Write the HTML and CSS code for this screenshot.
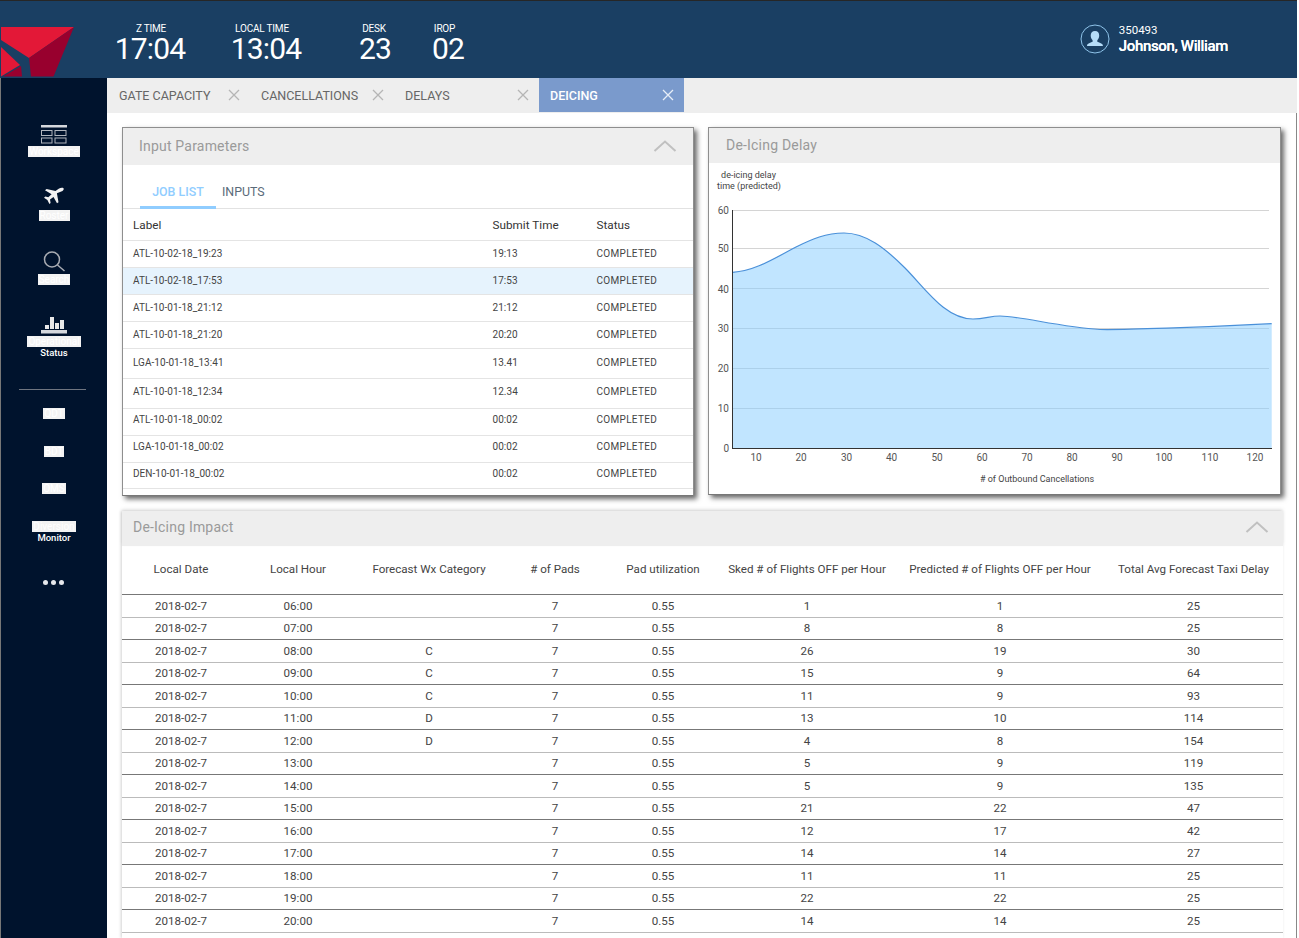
FILE: index.html
```html
<!DOCTYPE html>
<html lang="en">
<head>
<meta charset="utf-8">
<title>De-Icing</title>
<link rel="stylesheet" href="styles.css">
</head>
<body>
<div class="app">
  <header class="topbar">
    <svg class="logo" width="73" height="50" viewBox="0 27 73 50">
      <polygon fill="#e31837" points="0,27 73,27 28,58 0,40"/>
      <polygon fill="#98002e" points="73,27 28,58 30,76.5 52.5,76.5"/>
      <polygon fill="#e31837" points="0,47 19,65 0,76.5"/>
      <polygon fill="#98002e" points="20,66 2,76.5 21,76.5"/>
    </svg>
    <div class="clock clock-z"><span class="clock-label">Z TIME</span><span class="clock-value">17:04</span></div>
    <div class="clock clock-l"><span class="clock-label">LOCAL TIME</span><span class="clock-value">13:04</span></div>
    <div class="clock clock-d"><span class="clock-label">DESK</span><span class="clock-value">23</span></div>
    <div class="clock clock-i"><span class="clock-label">IROP</span><span class="clock-value">02</span></div>
    <div class="user">
      <svg class="avatar" width="30" height="30" viewBox="0 0 30 30">
        <circle cx="15" cy="15" r="14" fill="none" stroke="#8fc4ea" stroke-width="1"/>
        <path fill="#b5dcf8" d="M15 7c-2.8 0-4.3 2-4.3 4.6 0 2 .8 3.6 1.9 4.6v1.5c-1.6.8-4.6 1.4-5.3 2.8-.2.4-.3 1-.3 1.5h15.9c0-.5-.1-1.1-.3-1.5-.7-1.4-3.7-2-5.3-2.8v-1.5c1.1-1 1.9-2.6 1.9-4.6C19.300 9 17.800 7 15 7z"/>
      </svg>
      <div class="user-text"><span class="user-id">350493</span><span class="user-name">Johnson, William</span></div>
    </div>
  </header>
  <div class="below">
    <nav class="sidebar">
      <div class="nav-item nav-a">
        <svg width="28" height="19" viewBox="0 0 28 19"><rect x="1" y="0" width="26" height="2.500" fill="#d5d8dd"/><g fill="none" stroke="#b0b5bd" stroke-width="1"><rect x="1.500" y="5.500" width="10.500" height="5"/><rect x="15" y="5.500" width="11" height="5"/><rect x="1.500" y="13" width="10.500" height="5"/><rect x="15" y="13" width="11" height="5"/></g></svg>
        <span class="nav-label">Workspace</span>
      </div>
      <div class="nav-item nav-b">
        <svg width="22" height="19" viewBox="0 0 22 19"><path fill="#f2f2f2" d="M20.500 1.200c-1-.9-3.200-.5-4.800.6l-3.200 2.300L3.600 2 2 3.200l6.600 4-3.300 3-3-.6L1 10.700l3.400 2.200 2 4 1.200-1-.6-3.300 3.500-2.700 3.500 6.300 1.500-1-1.600-9L19.500 4c1-1 1.700-2 1-2.800z"/></svg>
        <span class="nav-label">Roster</span>
      </div>
      <div class="nav-item nav-c">
        <svg width="24" height="21" viewBox="0 0 24 21"><circle cx="10" cy="8.500" r="7.500" fill="none" stroke="#a8acb3" stroke-width="1.500"/><line x1="15.500" y1="14" x2="22.500" y2="20" stroke="#a8acb3" stroke-width="1.500"/></svg>
        <span class="nav-label">Search</span>
      </div>
      <div class="nav-item nav-d">
        <svg width="28" height="19" viewBox="0 0 28 19"><rect x="1" y="14" width="26" height="3.500" fill="#d5d8dd"/><rect x="5" y="9" width="4" height="4" fill="#e8e8e8"/><rect x="10" y="1" width="4" height="12" fill="#e8e8e8"/><rect x="15" y="7" width="4" height="6" fill="#e8e8e8"/><rect x="20" y="4" width="4" height="9" fill="#e8e8e8"/></svg>
        <span class="nav-label">Operational</span>
        <span class="nav-plain">Status</span>
      </div>
      <div class="nav-rule"></div>
      <div class="nav-item nav-e"><span class="nav-label">QDT</span></div>
      <div class="nav-item nav-e"><span class="nav-label">BDT</span></div>
      <div class="nav-item nav-e"><span class="nav-label">OMS</span></div>
      <div class="nav-item nav-f"><span class="nav-label">Diversion</span><span class="nav-plain">Monitor</span></div>
      <div class="nav-dots"><i></i><i></i><i></i></div>
    </nav>
    <main class="main">
      <div class="tabs">
        <div class="tab tab-1"><span>GATE CAPACITY</span><svg class="x" width="12" height="12" viewBox="0 0 12 12"><path d="M1 1l10 10M11 1L1 11"/></svg></div>
        <div class="tab tab-2"><span>CANCELLATIONS</span><svg class="x" width="12" height="12" viewBox="0 0 12 12"><path d="M1 1l10 10M11 1L1 11"/></svg></div>
        <div class="tab tab-3"><span>DELAYS</span><svg class="x" width="12" height="12" viewBox="0 0 12 12"><path d="M1 1l10 10M11 1L1 11"/></svg></div>
        <div class="tab tab-4 active"><span>DEICING</span><svg class="x" width="12" height="12" viewBox="0 0 12 12"><path d="M1 1l10 10M11 1L1 11"/></svg></div>
      </div>
      <div class="content">
        <div class="top-row">
          <section class="panel panel-input">
            <div class="panel-head head-input"><h2>Input Parameters</h2><svg class="chev" width="24" height="12" viewBox="0 0 24 12"><path d="M1.500 11L12 1.500 22.500 11"/></svg></div>
            <div class="subtabs"><span class="subtab on">JOB LIST</span><span class="subtab">INPUTS</span></div>
            <div class="job job-head"><span>Label</span><span>Submit Time</span><span>Status</span></div>
            <div class="job"><span>ATL-10-02-18_19:23</span><span>19:13</span><span class="done">COMPLETED</span></div>
            <div class="job sel"><span>ATL-10-02-18_17:53</span><span>17:53</span><span class="done">COMPLETED</span></div>
            <div class="job"><span>ATL-10-01-18_21:12</span><span>21:12</span><span class="done">COMPLETED</span></div>
            <div class="job"><span>ATL-10-01-18_21:20</span><span>20:20</span><span class="done">COMPLETED</span></div>
            <div class="job tall"><span>LGA-10-01-18_13:41</span><span>13.41</span><span class="done">COMPLETED</span></div>
            <div class="job tall up-4"><span>ATL-10-01-18_12:34</span><span>12.34</span><span class="done">COMPLETED</span></div>
            <div class="job up-5"><span>ATL-10-01-18_00:02</span><span>00:02</span><span class="done">COMPLETED</span></div>
            <div class="job short up-4"><span>LGA-10-01-18_00:02</span><span>00:02</span><span class="done">COMPLETED</span></div>
            <div class="job short up-3"><span>DEN-10-01-18_00:02</span><span>00:02</span><span class="done">COMPLETED</span></div>
          </section>
          <section class="panel panel-chart">
            <div class="panel-head head-chart"><h2>De-Icing Delay</h2></div>
            <svg class="chart" width="571" height="332" viewBox="709 163 571 332">
              <g class="grid">
                <line x1="732" y1="210.500" x2="1269" y2="210.500"/>
                <line x1="732" y1="248.500" x2="1269" y2="248.500"/>
                <line x1="732" y1="288.500" x2="1269" y2="288.500"/>
                <line x1="732" y1="328.500" x2="1269" y2="328.500"/>
                <line x1="732" y1="368.500" x2="1269" y2="368.500"/>
                <line x1="732" y1="408.500" x2="1269" y2="408.500"/>
              </g>
              <path class="area" d="M732.700 272.300C755 271 775 258 796 247C812 239 826 233 844 233C866 233 885 248 905 268C925 288 945 319 973 319C985 319 990 316 1000 316C1020 316 1060 327 1100 329.500C1120 330 1200 327.500 1271.700 323.700V448H732.700Z"/>
              <path class="curve" d="M732.700 272.300C755 271 775 258 796 247C812 239 826 233 844 233C866 233 885 248 905 268C925 288 945 319 973 319C985 319 990 316 1000 316C1020 316 1060 327 1100 329.500C1120 330 1200 327.500 1271.700 323.700"/>
              <line class="axis" x1="732.500" y1="210" x2="732.500" y2="448"/>
              <line class="axis" x1="732" y1="448.500" x2="1272" y2="448.500"/>
              <g class="ticks ticks-y">
                <text x="729" y="213.500">60</text><text x="729" y="252">50</text><text x="729" y="292.500">40</text><text x="729" y="332">30</text><text x="729" y="372">20</text><text x="729" y="411.500">10</text><text x="729" y="452">0</text>
              </g>
              <g class="ticks ticks-x">
                <text x="756" y="461">10</text><text x="801" y="461">20</text><text x="846.500" y="461">30</text><text x="891.500" y="461">40</text><text x="937" y="461">50</text><text x="982" y="461">60</text><text x="1027" y="461">70</text><text x="1072" y="461">80</text><text x="1117" y="461">90</text><text x="1164" y="461">100</text><text x="1210" y="461">110</text><text x="1255" y="461">120</text>
              </g>
              <text class="cap" x="748.500" y="178">de-icing delay</text>
              <text class="cap" x="749" y="189">time (predicted)</text>
              <text class="cap" x="1037" y="482"># of Outbound Cancellations</text>
            </svg>
          </section>
        </div>
        <section class="panel-wide">
          <div class="panel-head head-wide"><h2>De-Icing Impact</h2><svg class="chev" width="24" height="12" viewBox="0 0 24 12"><path d="M1.500 11L12 1.500 22.500 11"/></svg></div>
          <table class="impact">
            <colgroup><col class="c1"><col class="c2"><col class="c3"><col class="c4"><col class="c5"><col class="c6"><col class="c7"><col class="c8"></colgroup>
            <thead><tr><th>Local Date</th><th>Local Hour</th><th>Forecast Wx Category</th><th># of Pads</th><th>Pad utilization</th><th>Sked # of Flights OFF per Hour</th><th>Predicted # of Flights OFF per Hour</th><th>Total Avg Forecast Taxi Delay</th></tr></thead>
            <tbody>
              <tr><td>2018-02-7</td><td>06:00</td><td></td><td>7</td><td>0.55</td><td>1</td><td>1</td><td>25</td></tr>
              <tr><td>2018-02-7</td><td>07:00</td><td></td><td>7</td><td>0.55</td><td>8</td><td>8</td><td>25</td></tr>
              <tr><td>2018-02-7</td><td>08:00</td><td>C</td><td>7</td><td>0.55</td><td>26</td><td>19</td><td>30</td></tr>
              <tr><td>2018-02-7</td><td>09:00</td><td>C</td><td>7</td><td>0.55</td><td>15</td><td>9</td><td>64</td></tr>
              <tr><td>2018-02-7</td><td>10:00</td><td>C</td><td>7</td><td>0.55</td><td>11</td><td>9</td><td>93</td></tr>
              <tr><td>2018-02-7</td><td>11:00</td><td>D</td><td>7</td><td>0.55</td><td>13</td><td>10</td><td>114</td></tr>
              <tr><td>2018-02-7</td><td>12:00</td><td>D</td><td>7</td><td>0.55</td><td>4</td><td>8</td><td>154</td></tr>
              <tr><td>2018-02-7</td><td>13:00</td><td></td><td>7</td><td>0.55</td><td>5</td><td>9</td><td>119</td></tr>
              <tr><td>2018-02-7</td><td>14:00</td><td></td><td>7</td><td>0.55</td><td>5</td><td>9</td><td>135</td></tr>
              <tr><td>2018-02-7</td><td>15:00</td><td></td><td>7</td><td>0.55</td><td>21</td><td>22</td><td>47</td></tr>
              <tr><td>2018-02-7</td><td>16:00</td><td></td><td>7</td><td>0.55</td><td>12</td><td>17</td><td>42</td></tr>
              <tr><td>2018-02-7</td><td>17:00</td><td></td><td>7</td><td>0.55</td><td>14</td><td>14</td><td>27</td></tr>
              <tr><td>2018-02-7</td><td>18:00</td><td></td><td>7</td><td>0.55</td><td>11</td><td>11</td><td>25</td></tr>
              <tr><td>2018-02-7</td><td>19:00</td><td></td><td>7</td><td>0.55</td><td>22</td><td>22</td><td>25</td></tr>
              <tr><td>2018-02-7</td><td>20:00</td><td></td><td>7</td><td>0.55</td><td>14</td><td>14</td><td>25</td></tr>
            </tbody>
          </table>
        </section>
      </div>
    </main>
  </div>
</div>
</body>
</html>
```
FILE: styles.css
```css
* { box-sizing: border-box; }
html, body { margin: 0; height: 938px; overflow: hidden; background: #fff; }
body { font-family: Roboto, "Liberation Sans", sans-serif; color: #333; }

.app { width: 1297px; height: 938px; display: flex; flex-direction: column; border-left: 1px solid #777; }

.topbar { height: 78px; flex: none; background: #1a3f63; border-top: 1px solid #262626; display: flex; align-items: flex-start; position: relative; color: #fff; margin-left: -1px; padding-left: 1px; }
.logo { flex: none; margin-top: 26px; }
.clock { flex: none; display: flex; flex-direction: column; align-items: center; padding-top: 22px; }
.clock-z { width: 116px; margin-left: 18px; }
.clock-l { width: 116px; }
.clock-d { width: 102px; }
.clock-i { width: 44px; }
.clock-label { font-size: 10px; line-height: 12px; letter-spacing: -.2px; }
.clock-z .clock-label { margin-left: 2px; }
.clock-l .clock-label { margin-right: 8px; }
.clock-d .clock-label { margin-right: 2px; }
.clock-i .clock-label { margin-right: 7px; }
.clock-value { font-size: 30px; line-height: 28px; letter-spacing: -.8px; }

.user { margin-left: auto; margin-right: 69px; margin-top: 22px; display: flex; align-items: center; gap: 9px; }
.avatar { flex: none; }
.user-text { display: flex; flex-direction: column; }
.user-id { font-size: 11.500px; line-height: 14px; }
.user-name { font-size: 15px; line-height: 18px; font-weight: 500; letter-spacing: -.35px; text-shadow: 0 0 .6px #fff; }

.below { flex: 1; display: flex; min-height: 0; }

.sidebar { width: 106px; flex: none; background: #00132d; padding-top: 47px; display: flex; flex-direction: column; align-items: center; color: #fff; }
.nav-item { display: flex; flex-direction: column; align-items: center; width: 100%; }
.nav-a { height: 62px; gap: 2px; }
.nav-b { height: 64px; gap: 4px; }
.nav-c { height: 65px; gap: 2px; }
.nav-d { height: 73px; gap: 1px; }
.nav-e { height: 37.500px; }
.nav-f { height: 59px; gap: 1px; }
.nav-label { display: block; background: #f3f3f3; color: #fff; font-size: 10px; line-height: 11px; padding: 0 1px; }
.nav-plain { display: block; font-size: 9.500px; line-height: 10px; font-weight: 500; }
.nav-rule { width: 67px; height: 1px; background: #6f7580; margin: 0 4px 18px 0; flex: none; }
.nav-dots { display: flex; gap: 3px; margin-right: 2px; }
.nav-dots i { display: block; width: 5px; height: 5px; border-radius: 50%; background: #e6e8ec; }

.main { flex: 1; min-width: 0; display: flex; flex-direction: column; border-right: 1px solid #888; }

.tabs { height: 35px; flex: none; background: #eee; display: flex; align-items: flex-start; margin-right: -1px; }
.tab { height: 34px; display: flex; align-items: center; justify-content: space-between; padding: 0 10px 0 11px; font-size: 12.500px; color: #666; }
.tab-1 { width: 143px; padding-left: 12px; }
.tab-2 { width: 144px; }
.tab-3 { width: 145px; }
.tab-4 { width: 145px; }
.tab.active { background: #7a9acc; color: #fff; font-weight: 500; }
.x { flex: none; fill: none; stroke: #b5b5b5; stroke-width: 1.300; }
.active .x { stroke: #e8eef7; }

.content { flex: 1; min-height: 0; padding: 14px 0 0 15px; display: flex; flex-direction: column; overflow: hidden; }
.top-row { display: flex; gap: 14px; flex: none; height: 369px; }

.panel { background: #fff; border: 1px solid #8e8e8e; border-bottom-color: #777; box-shadow: 3px 3px 5px rgba(0,0,0,.6); }
.panel-input { width: 572px; height: 369px; }
.panel-chart { width: 573px; height: 368px; }
.panel-head { background: #eee; display: flex; align-items: center; justify-content: space-between; }
.panel-head h2 { margin: 0; font-size: 14px; font-weight: 400; color: #9a9a9a; letter-spacing: .2px; }
.head-input { height: 37px; padding: 0 16px 2px 16px; }
.head-chart { height: 35px; padding: 0 17px 2px; }
.head-wide { height: 35px; padding: 0 14px 4px 11px; box-shadow: 0 -2px 4px rgba(0,0,0,.08); }
.chev { flex: none; fill: none; stroke: #c0c0c0; stroke-width: 2; }

.subtabs { height: 44px; display: flex; align-items: flex-end; padding-left: 17px; border-bottom: 1px solid #e2e2e2; }
.subtab { height: 100%; display: flex; align-items: center; padding-top: 9px; font-size: 12.400px; color: #5a6b7a; padding-left: 6px; }
.subtab.on { width: 76px; justify-content: center; padding-left: 0; color: #90cdff; font-weight: 500; border-bottom: 3px solid #90cdff; margin-bottom: -1px; height: calc(100% + 1px); padding-top: 12px; }

.job { height: 27px; display: grid; grid-template-columns: 359.500px 104px 1fr; align-items: center; padding: 0 0 1px 10px; border-bottom: 1px solid #e4e4e4; font-size: 10px; letter-spacing: .04px; color: #444; }
.job.sel { background: #e6f3fd; }
.job.tall { height: 30px; padding-bottom: 2px; }
.job.short { height: 26.500px; }
.job.up-3 { padding-bottom: 3px; }
.job.up-4 { padding-bottom: 4px; }
.job.up-5 { padding-bottom: 5px; }
.job-head { height: 32px; font-size: 11.700px; color: #333; padding-bottom: 0; }
.done { letter-spacing: .3px; }

.chart { display: block; font-family: Roboto, "Liberation Sans", sans-serif; }
.grid line { stroke: #d4d4d4; stroke-width: 1; }
.area { fill: #84ccff; fill-opacity: .5; stroke: none; }
.curve { fill: none; stroke: #4a90d9; stroke-width: 1.200; }
.axis { stroke: #333; stroke-width: 1; }
.ticks text { font-size: 10px; fill: #555; }
.ticks-y text { text-anchor: end; }
.ticks-x text { text-anchor: middle; }
.cap { font-size: 9px; fill: #444; text-anchor: middle; }

.panel-wide { margin-top: 15px; width: 1161px; flex: 1; background: #fff; box-shadow: -1px 0 3px rgba(0,0,0,.18); }
.impact { width: 1161px; table-layout: fixed; border-collapse: collapse; font-size: 11.600px; color: #444; }
.c1 { width: 118px; } .c2 { width: 116px; } .c3 { width: 146px; } .c4 { width: 106px; }
.c5 { width: 110px; } .c6 { width: 178px; } .c7 { width: 208px; } .c8 { width: 179px; }
.impact th { height: 48.500px; font-weight: 400; text-align: center; border-bottom: 1px solid #777; padding: 0 0 2px; white-space: nowrap; color: #444; }
.impact td { height: 22.500px; text-align: center; padding: 0; border-bottom: 1px solid #777; }
.impact tbody tr:nth-child(odd) td { border-bottom-color: #bbb; }
```
